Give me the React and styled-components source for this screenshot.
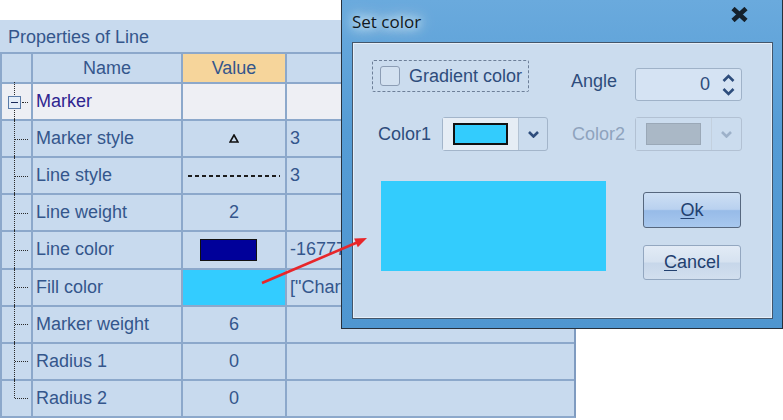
import styled, { createGlobalStyle } from "styled-components"

const GlobalStyle = createGlobalStyle`
  html, body {
    margin: 0;
    padding: 0;
    background: #ffffff;
  }
  body {
    font-family: "Liberation Sans", Arial, sans-serif;
  }
`

const Page = styled.div`
  position: relative;
  width: 783px;
  height: 420px;
  overflow: hidden;
  padding-top: 20px;
  box-sizing: border-box;
`

/* ---------- property grid ---------- */

const Panel = styled.div`
  width: 576px;
  height: 398px;
  display: flex;
  flex-direction: column;
  background: #c8daee;
`

const PanelTitle = styled.div`
  height: 32px;
  padding-left: 8px;
  line-height: 34px;
  font-size: 18px;
  color: #34568c;
`

const Grid = styled.div`
  flex: 1;
  display: grid;
  grid-template-columns: 29px 148px 102px 1fr;
  grid-template-rows: 28px repeat(9, 1fr);
  gap: 2px;
  border: 2px solid #8ca8cb;
  border-right-color: #7f9bc0;
  background: #8ca8cb;
`

const HeadCell = styled.div`
  display: flex;
  align-items: center;
  justify-content: center;
  font-size: 18px;
  color: #34568c;
  background: ${({ $active }) => ($active ? "#f6d59b" : "#c8daee")};
`

const Cell = styled.div`
  display: flex;
  align-items: center;
  justify-content: ${({ $center }) => ($center ? "center" : "flex-start")};
  padding-left: ${({ $center }) => ($center ? "0" : "3px")};
  overflow: hidden;
  white-space: nowrap;
  font-size: 18px;
  color: ${({ $group }) => ($group ? "#2e2590" : "#34568c")};
  background: ${({ $group, $fill }) => $fill || ($group ? "#eeeff4" : "#c8daee")};
`

const TreeCell = styled.div`
  position: relative;
  background: ${({ $group }) => ($group ? "#eeeff4" : "#c8daee")};

  &::before {
    content: "";
    position: absolute;
    left: 12px;
    top: -2px;
    bottom: ${({ $last }) => ($last ? "50%" : "-2px")};
    border-left: 1px dotted #2a2a2a;
  }

  &::after {
    content: "";
    position: absolute;
    left: ${({ $group }) => ($group ? "20px" : "13px")};
    width: ${({ $group }) => ($group ? "6px" : "13px")};
    top: 50%;
    border-top: 1px dotted #2a2a2a;
  }
`

const ExpandBox = styled.span`
  position: absolute;
  left: 6px;
  top: 50%;
  width: 11px;
  height: 11px;
  margin-top: -6px;
  border: 1px solid #5a7ba8;
  background: #e4edf8;
  z-index: 1;

  &::after {
    content: "";
    position: absolute;
    left: 2px;
    right: 2px;
    top: 5px;
    height: 1px;
    background: #1a2a5a;
  }
`

const DashLine = styled.div`
  width: 92px;
  height: 2px;
  background: repeating-linear-gradient(90deg, #1c1c1c 0 4px, transparent 4px 7px);
`

const Swatch = styled.div`
  width: 55px;
  height: 20px;
  margin-right: 12px;
  border: 1px solid #111;
  background: ${({ $color }) => $color};
`

const Triangle = () => (
  <svg width="10" height="9" viewBox="0 0 10 9">
    <polygon points="5,1 9,8 1,8" fill="none" stroke="#111" strokeWidth="1.6" />
  </svg>
)

const rows = [
  { name: "Marker style", value: <Triangle />, extra: "3" },
  { name: "Line style", value: <DashLine />, extra: "3" },
  { name: "Line weight", value: "2", extra: "" },
  { name: "Line color", value: <Swatch $color="#00009a" />, extra: "-16777216" },
  { name: "Fill color", value: "", extra: '["Chart.FillColor"]', fill: "#33ccff" },
  { name: "Marker weight", value: "6", extra: "" },
  { name: "Radius 1", value: "0", extra: "" },
  { name: "Radius 2", value: "0", extra: "" },
]

/* ---------- dialog ---------- */

const Dialog = styled.div`
  position: absolute;
  left: 341px;
  top: 0;
  width: 442px;
  height: 329px;
  box-sizing: border-box;
  border: 1px solid #27313d;
  border-top: none;
  background: linear-gradient(180deg, #6aaadd 0%, #559cd5 40%, #4f96d0 100%);
  padding: 0 9px 9px 10px;
  display: flex;
  flex-direction: column;
`

const TitleBar = styled.div`
  height: 42px;
  display: flex;
  align-items: center;
  justify-content: space-between;
`

const TitleText = styled.span`
  font-family: "Open Sans", "Noto Sans", sans-serif;
  font-size: 17px;
  color: #101820;
  text-shadow: 0 0 8px #eaf4ff, 0 0 14px #eaf4ff, 0 0 20px #dcecfb;
`

const CloseIcon = styled.svg`
  align-self: flex-start;
  margin-top: 7px;
  margin-right: 25px;
`

const Body = styled.div`
  flex: 1;
  border: 1px solid #43566b;
  box-shadow: inset 0 0 0 1px #e6eef7;
  background: #cbdcee;
  padding: 17px 0 0 19px;
  display: flex;
  flex-direction: column;
`

const Row = styled.div`
  display: flex;
  align-items: flex-start;
  margin-top: ${({ $top }) => $top || 0}px;
`

const FocusBox = styled.label`
  width: 157px;
  height: 32px;
  box-sizing: border-box;
  border: 1px dashed #6d7f98;
  border-radius: 2px;
  display: flex;
  align-items: center;
  gap: 9px;
  padding-left: 7px;
  font-size: 18px;
  color: #2e4c7c;
`

const CheckBox = styled.span`
  width: 20px;
  height: 20px;
  box-sizing: border-box;
  border: 1px solid #8c9db4;
  border-radius: 3px;
  background: #d3e1f0;
`

const Group = styled.div`
  display: flex;
  align-items: center;
  margin-left: ${({ $left }) => $left || 0}px;
  margin-top: ${({ $top }) => $top || 0}px;
`

const Label = styled.span`
  width: ${({ $width }) => $width}px;
  font-size: 18px;
  color: ${({ $disabled }) => ($disabled ? "#8fa3bd" : "#2e4c7c")};
  padding-bottom: ${({ $lift }) => $lift || 0}px;
`

const SpinBox = styled.div`
  width: 107px;
  height: 33px;
  box-sizing: border-box;
  border: 1px solid #9fb2c8;
  border-radius: 3px;
  background: #d5e3f3;
  display: flex;
  align-items: center;
  justify-content: flex-end;
  gap: 12px;
  padding-right: 6px;
  font-size: 18px;
  color: #2e4c7c;
`

const SpinArrows = styled.svg`
  display: block;
`

const Combo = styled.div`
  width: ${({ $width }) => $width}px;
  height: 34px;
  box-sizing: border-box;
  border: 1px solid ${({ $disabled }) => ($disabled ? "#b2c1d3" : "#a3b5ca")};
  border-radius: 3px;
  display: flex;
`

const ComboField = styled.div`
  width: 76px;
  display: flex;
  align-items: center;
  padding-left: 10px;
  box-sizing: border-box;
  border-right: 1px solid ${({ $disabled }) => ($disabled ? "#c3d0de" : "#b4c3d4")};
  background: ${({ $disabled }) => ($disabled ? "#cbdcee" : "#e6edf5")};
`

const ComboSwatch = styled.div`
  width: 55px;
  height: 22px;
  box-sizing: border-box;
  border: ${({ $disabled }) => ($disabled ? "1px solid #9aa8b7" : "2px solid #111")};
  background: ${({ $color }) => $color};
`

const ComboButton = styled.div`
  flex: 1;
  display: flex;
  align-items: center;
  justify-content: center;
  color: ${({ $disabled }) => ($disabled ? "#9db1c9" : "#2e4d7c")};
`

const Chevron = ({ up }) => (
  <svg width="11" height="7" viewBox="0 0 11 7">
    <polyline
      points={up ? "1,6 5.5,1.5 10,6" : "1,1 5.5,5.5 10,1"}
      fill="none"
      stroke="currentColor"
      strokeWidth="2.6"
    />
  </svg>
)

const Preview = styled.div`
  width: 225px;
  height: 90px;
  margin-left: 9px;
  background: #33ccfd;
`

const Buttons = styled.div`
  display: flex;
  flex-direction: column;
  gap: 17px;
  margin-left: 37px;
  margin-top: 11px;
`

const Button = styled.button`
  width: 98px;
  height: ${({ $primary }) => ($primary ? 36 : 35)}px;
  border-radius: 3px;
  border: 1px solid ${({ $primary }) => ($primary ? "#56677e" : "#93a7c0")};
  background: ${({ $primary }) =>
    $primary
      ? "linear-gradient(180deg, #cddff4 0%, #b9d1ef 48%, #97bbe8 52%, #a8c8ee 100%)"
      : "linear-gradient(180deg, #e2ebf6 0%, #d6e2f0 48%, #c7d7ea 52%, #d2dfee 100%)"};
  font-family: "Liberation Sans", Arial, sans-serif;
  font-size: 18px;
  color: #22406f;
  padding: 0;

  u {
    text-decoration: underline;
    text-underline-offset: 2px;
  }
`

/* ---------- annotation ---------- */

const Overlay = styled.svg`
  position: absolute;
  left: 0;
  top: 0;
  pointer-events: none;
`

export default function App() {
  return (
    <Page>
      <GlobalStyle />
      <Panel>
        <PanelTitle>Properties of Line</PanelTitle>
        <Grid>
          <HeadCell />
          <HeadCell>Name</HeadCell>
          <HeadCell $active>Value</HeadCell>
          <HeadCell />

          <TreeCell $group>
            <ExpandBox />
          </TreeCell>
          <Cell $group>Marker</Cell>
          <Cell $group />
          <Cell $group />

          {rows.map((row, i) => [
            <TreeCell key={`t${i}`} $last={i === rows.length - 1} />,
            <Cell key={`n${i}`}>{row.name}</Cell>,
            <Cell key={`v${i}`} $center $fill={row.fill}>
              {row.value}
            </Cell>,
            <Cell key={`e${i}`}>{row.extra}</Cell>,
          ])}
        </Grid>
      </Panel>

      <Dialog>
        <TitleBar>
          <TitleText>Set color</TitleText>
          <CloseIcon width="17" height="15" viewBox="0 0 17 15">
            <path d="M2 1.5 L15 13.5 M15 1.5 L2 13.5" stroke="#15212c" strokeWidth="4.6" />
          </CloseIcon>
        </TitleBar>
        <Body>
          <Row>
            <FocusBox>
              <CheckBox />
              Gradient color
            </FocusBox>
            <Group $left={42} $top={8}>
              <Label $width={64} $lift={6}>
                Angle
              </Label>
              <SpinBox>
                0
                <SpinArrows width="13" height="22" viewBox="0 0 13 22">
                  <polyline points="1.5,7 6.5,2 11.5,7" fill="none" stroke="#2e4d7c" strokeWidth="2.6" />
                  <polyline points="1.5,15 6.5,20 11.5,15" fill="none" stroke="#2e4d7c" strokeWidth="2.6" />
                </SpinArrows>
              </SpinBox>
            </Group>
          </Row>

          <Row $top={16}>
            <Group $left={6}>
              <Label $width={64}>Color1</Label>
              <Combo $width={106}>
                <ComboField>
                  <ComboSwatch $color="#33ccfd" />
                </ComboField>
                <ComboButton>
                  <Chevron />
                </ComboButton>
              </Combo>
            </Group>
            <Group $left={24}>
              <Label $width={63} $disabled>
                Color2
              </Label>
              <Combo $width={107} $disabled>
                <ComboField $disabled>
                  <ComboSwatch $disabled $color="#aab8c6" />
                </ComboField>
                <ComboButton $disabled>
                  <Chevron />
                </ComboButton>
              </Combo>
            </Group>
          </Row>

          <Row $top={30}>
            <Preview />
            <Buttons>
              <Button $primary>
                <u>O</u>k
              </Button>
              <Button>
                <u>C</u>ancel
              </Button>
            </Buttons>
          </Row>
        </Body>
      </Dialog>

      <Overlay width="783" height="420" viewBox="0 0 783 420">
        <line x1="262" y1="283" x2="357" y2="242.5" stroke="#e8262a" strokeWidth="2.6" />
        <polygon points="367,238 357.8,247.2 354.2,238.6" fill="#e8262a" />
      </Overlay>
    </Page>
  )
}
